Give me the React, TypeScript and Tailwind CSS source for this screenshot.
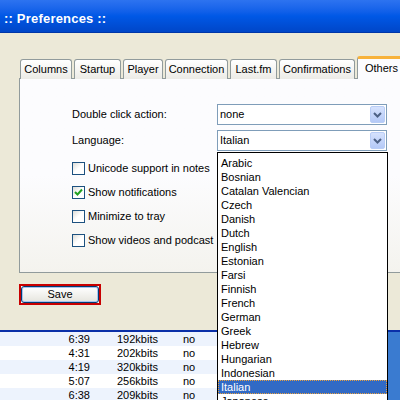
import React from "react";

const tabs = [
  { label: "Columns", w: "w-[52px]" },
  { label: "Startup", w: "w-[47px]" },
  { label: "Player", w: "w-[40px]" },
  { label: "Connection", w: "w-[63px]" },
  { label: "Last.fm", w: "w-[47px]" },
  { label: "Confirmations", w: "w-[76px]" },
];

const langs = [
  "Arabic",
  "Bosnian",
  "Catalan Valencian",
  "Czech",
  "Danish",
  "Dutch",
  "English",
  "Estonian",
  "Farsi",
  "Finnish",
  "French",
  "German",
  "Greek",
  "Hebrew",
  "Hungarian",
  "Indonesian",
  "Italian",
  "Japanese",
];

const rows = [
  ["6:39", "192kbits", "no"],
  ["4:31", "202kbits", "no"],
  ["4:19", "320kbits", "no"],
  ["5:07", "256kbits", "no"],
  ["6:38", "209kbits", "no"],
];

function Chevron() {
  return (
    <div className="w-[15px] h-[17px] mr-px rounded-[2px] border border-[#b9cdf6] bg-gradient-to-b from-[#d6e2fd] to-[#b4c9f7] flex items-center justify-center">
      <svg width="9" height="6" viewBox="0 0 9 6">
        <polyline points="1,1 4.5,4.5 8,1" fill="none" stroke="#4d6185" strokeWidth="2" />
      </svg>
    </div>
  );
}

function Select({ value }: { value: string }) {
  return (
    <div className="w-[170px] h-[21px] border border-[#7f9db9] bg-white flex items-center justify-between">
      <span className="pl-[2px]">{value}</span>
      <Chevron />
    </div>
  );
}

function Check({ checked, label }: { checked?: boolean; label: string }) {
  return (
    <div className="flex items-center h-[13px]">
      <div className="w-[13px] h-[13px] border border-[#1c5180] bg-gradient-to-br from-[#dcdcd7] via-white to-white flex items-center justify-center">
        {checked && (
          <svg width="9" height="9" viewBox="0 0 9 9">
            <polyline points="1,4 3.5,6.5 8,1.5" fill="none" stroke="#21a121" strokeWidth="2" />
          </svg>
        )}
      </div>
      <span className="ml-[3px]">{label}</span>
    </div>
  );
}

export default function App() {
  return (
    <div
      className="relative w-[400px] h-[400px] overflow-hidden bg-[#ece9d8] text-[11px] text-black leading-none"
      style={{ fontFamily: '"Liberation Sans", Arial, sans-serif' }}
    >
      {/* title bar */}
      <div className="h-[33px] bg-gradient-to-b from-[#2d73f0] via-[#0058e6] to-[#0046c8] border-b border-[#0036a8] flex items-end pl-[4px] pb-[7px]">
        <span className="text-white font-bold text-[13px] tracking-[0.2px]">:: Preferences ::</span>
      </div>

      {/* tabs */}
      <div className="relative z-10 mt-[22px] ml-[20px] flex items-end gap-[2px] h-[23px]">
        {tabs.map((t) => (
          <div
            key={t.label}
            className={`${t.w} h-[20px] mb-[-1px] shrink-0 rounded-t-[3px] border border-b-0 border-[#919b9c] bg-gradient-to-b from-white to-[#ecebe6] flex items-center justify-center`}
          >
            {t.label}
          </div>
        ))}
        <div className="w-[50px] h-[23px] mb-[-1px] shrink-0 rounded-t-[3px] border border-b-0 border-[#919b9c] border-t-[3px] border-t-[#f7b23b] bg-[#fcfcfe] flex items-start pt-[4px] pl-[7px]">
          Others
        </div>
      </div>

      {/* panel */}
      <div className="ml-[19px] w-[420px] h-[195px] border border-[#919b9c] bg-gradient-to-b from-[#fcfcfe] via-[#fcfcfe] to-[#f4f3ee] pl-[52px] pt-[25px]">
        <div className="flex items-center h-[21px]">
          <span className="w-[145px]">Double click action:</span>
          <Select value="none" />
        </div>
        <div className="flex items-center h-[21px] mt-[5px]">
          <span className="w-[145px]">Language:</span>
          <Select value="Italian" />
        </div>
        <div className="mt-[11px] flex flex-col gap-[11px]">
          <Check label="Unicode support in notes" />
          <Check checked label="Show notifications" />
          <Check label="Minimize to tray" />
          <Check label="Show videos and podcast" />
        </div>
      </div>

      {/* save */}
      <div className="mt-[11px] ml-[19px] w-[82px] h-[21px] border-2 border-[#c80000] bg-white">
        <div className="w-full h-full rounded-[3px] border border-[#003c74] bg-gradient-to-b from-white to-[#e6e5de] shadow-[inset_0_0_0_1px_#a8c2ee] flex items-center justify-center">
          Save
        </div>
      </div>

      {/* table */}
      <div className="mt-[25px] border-t-2 border-[#0a2fa8] flex">
        <div className="flex-1">
          {rows.map((r, i) => (
            <div
              key={i}
              className={`h-[14px] flex items-center ${i % 2 === 0 ? "bg-[#edf3fd]" : "bg-white"}`}
            >
              <span className="w-[90px] text-right">{r[0]}</span>
              <span className="ml-[27px] w-[66px]">{r[1]}</span>
              <span>{r[2]}</span>
            </div>
          ))}
        </div>
        <div className="w-[12px] bg-[#3a7bd0]" />
      </div>

      {/* dropdown list */}
      <div className="absolute left-[217px] top-[152px] w-[171px] h-[260px] border border-black bg-white pt-[3px]">
        {langs.map((l) => (
          <div
            key={l}
            className={`h-[14px] flex items-center pl-[3px] ${
              l === "Italian" ? "bg-[#316ac5] text-white outline outline-1 outline-dotted outline-[#e8a040] -outline-offset-1" : ""
            }`}
          >
            {l}
          </div>
        ))}
      </div>
    </div>
  );
}
